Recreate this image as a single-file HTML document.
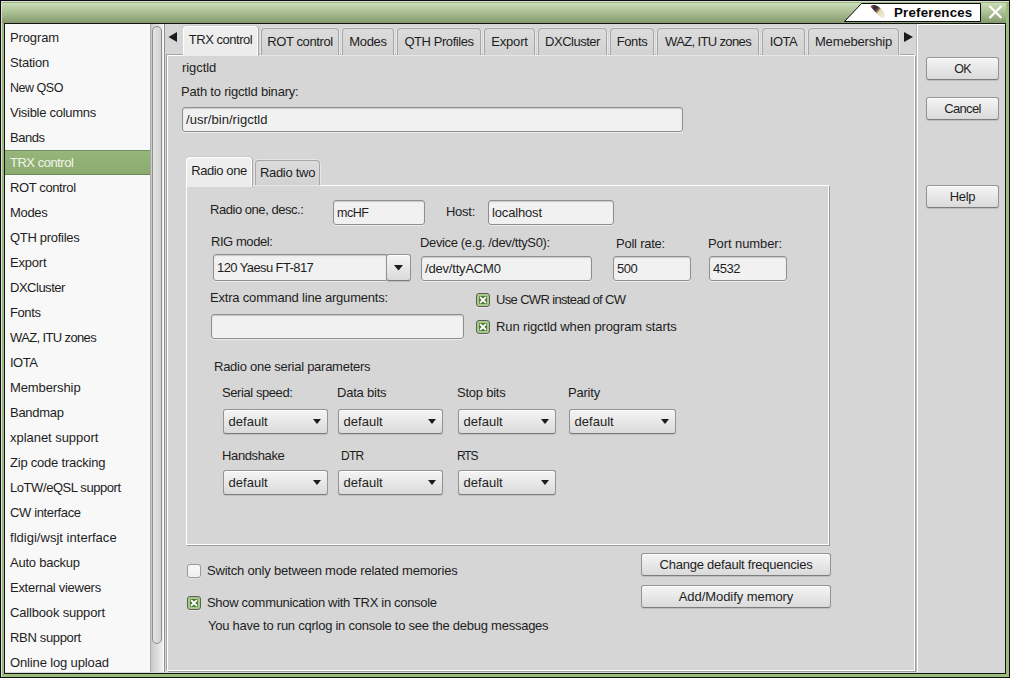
<!DOCTYPE html>
<html><head><meta charset="utf-8"><title>Preferences</title>
<style>
*{box-sizing:border-box;margin:0;padding:0}
html,body{width:1010px;height:678px;overflow:hidden}
body{position:relative;background:#9cbc7e;font-family:"Liberation Sans",sans-serif;font-size:13px;letter-spacing:-0.25px;color:#1e1e1e}
.a{position:absolute}
.t{position:absolute;white-space:nowrap;line-height:16px;height:16px;margin-top:1px}
/* frame */
#frame{left:0;top:0;width:1010px;height:678px;border:1px solid #0c0c0c}
#hl-top{left:1px;top:1px;width:1008px;height:1px;background:#dcdcdc}
#hl-left{left:1px;top:1px;width:1px;height:676px;background:#dcdcdc}
#titlebar{left:2px;top:2px;width:1004px;height:21px;background:linear-gradient(#9dba82 0,#9dba82 1px,#c9deb5 1.100px,#a8bd91 11px,#84996b 21px)}
#inner-border{left:4px;top:23px;width:1002px;height:651px;border:1px solid #141414;background:#d6d6d6}
/* list */
#list{left:5px;top:24px;width:145px;height:648px;background:#f8f8f8;overflow:hidden}
#list .t{left:5px}
#sel{left:0;top:126px;width:145px;height:25px;background:linear-gradient(#96b57a,#8cab70);border-top:1px solid #748f5b;border-bottom:1px solid #708a57}
#trough{left:150px;top:24px;width:13px;height:648px;background:linear-gradient(90deg,#c9c9c9,#f0f0f0);border-left:1px solid #a9a9a9}
#thumb{left:152px;top:26px;width:10px;height:618px;border:1px solid #8e8e8e;border-radius:5px;background:linear-gradient(90deg,#e4e4e4,#d2d2d2)}
/* notebook */
.tab{position:absolute;top:28px;height:27px;background:linear-gradient(#dcdcdc,#d2d2d2);border:1px solid #a6a6a6;border-bottom:none;border-radius:4px 4px 0 0;box-shadow:0 0 0 1px #e6e6e6;text-align:center;line-height:25px;white-space:nowrap}
.tab.on{top:26px;height:30px;background:linear-gradient(#efefef,#ebebeb);border:1px solid #fff;border-bottom:none;box-shadow:1px 0 0 #a6a6a6,0 -1px 0 #c8c8c8;line-height:26px;z-index:3}
.page{position:absolute;border:1px solid #fff;background:#d6d6d6;box-shadow:1px 1px 0 #9c9c9c,-1px -1px 0 #a4a4a4}
.entry{position:absolute;height:25px;background:#f1f1f1;border:1px solid #8e8e8e;border-radius:3px;box-shadow:inset 0 1px 1px #c8c8c8,0 1px 0 #ececec;line-height:23px;padding-left:3px;white-space:nowrap}
.btn{position:absolute;height:23px;background:linear-gradient(#f5f5f5,#dadada);border:1px solid #949494;border-bottom-color:#7c7c7c;border-radius:3px;box-shadow:inset 0 1px 0 #fff,0 1px 1px #bdbdbd;text-align:center;line-height:21px;white-space:nowrap}
.combo{position:absolute;height:25px;background:linear-gradient(#f5f5f5,#dadada);border:1px solid #949494;border-bottom-color:#7c7c7c;border-radius:3px;box-shadow:inset 0 1px 0 #fff,0 1px 1px #bdbdbd;line-height:23px;padding-left:4.500px;white-space:nowrap}
.combo:after{content:"";position:absolute;right:6.500px;top:9px;border:4.500px solid transparent;border-top:5.500px solid #1c1c1c;border-bottom:none}
.cb{position:absolute;width:14px;height:14px;border:1px solid #999;border-radius:3px;background:linear-gradient(#f8f8f8,#f0f0f0);box-shadow:0 1px 0 #e4e4e4}
.cb.on{border-color:#5e5e5e;background:#a7cb87}
.cb.on svg{position:absolute;left:0;top:0}
</style></head><body>
<div class="a" id="frame"></div>
<div class="a" id="hl-top"></div><div class="a" id="hl-left"></div>
<div class="a" id="titlebar"></div>
<div class="a" id="inner-border"></div>

<!-- title tab -->
<svg class="a" style="left:840px;top:0" width="170" height="24" viewBox="0 0 170 24">
 <polygon points="4.5,21.5 21.5,3.5 140.5,3.5 140.5,21.5" fill="#fff" stroke="#0c0c0c" stroke-width="1"/>
 <defs><linearGradient id="fg" gradientUnits="userSpaceOnUse" x1="30.500" y1="6" x2="44.500" y2="17.500"><stop offset="0" stop-color="#93522c"/><stop offset=".1" stop-color="#6a4030"/><stop offset=".22" stop-color="#2e2c42"/><stop offset=".36" stop-color="#3a3444"/><stop offset=".46" stop-color="#8e6844"/><stop offset=".56" stop-color="#e4d9bc"/><stop offset="1" stop-color="#f2eddd"/></linearGradient></defs>
 <path d="M30.500 6.500C31.500 5.200 33 4.800 34.500 5 38 5.500 42.500 9.500 44.300 12.500 45.300 14.300 45 16.500 43.900 17.500L44.600 19.300 43.400 17.600C42 17.700 40.500 17.100 39.800 16.600 37.500 14.500 33.500 10 30.500 6.500z" fill="url(#fg)"/>
 <path d="M149.500 6l12 12M161.500 6l-12 12" stroke="#fdfdfd" stroke-width="2.200" fill="none"/>
</svg>
<div class="t" style="left:894px;top:4px;font-weight:bold;font-size:13.3px;letter-spacing:0;color:#0a0a0a"><span style="letter-spacing:0.21px">Preferences</span></div>

<!-- left list -->
<div class="a" id="list">
 <div class="a" id="sel"></div>
 <div class="t" style="top:5px"><span style="letter-spacing:-0.13px">Program</span></div>
 <div class="t" style="top:30px"><span style="letter-spacing:-0.19px">Station</span></div>
 <div class="t" style="top:55px"><span style="font-size:12.5px;letter-spacing:-0.48px">New QSO</span></div>
 <div class="t" style="top:80px"><span style="letter-spacing:-0.27px">Visible columns</span></div>
 <div class="t" style="top:105px"><span style="letter-spacing:-0.47px">Bands</span></div>
 <div class="t" style="top:130px;color:#f4f4ea"><span style="letter-spacing:-0.48px">TRX control</span></div>
 <div class="t" style="top:155px"><span style="letter-spacing:-0.38px">ROT control</span></div>
 <div class="t" style="top:180px"><span style="letter-spacing:-0.32px">Modes</span></div>
 <div class="t" style="top:205px"><span style="letter-spacing:-0.3px">QTH profiles</span></div>
 <div class="t" style="top:230px"><span style="letter-spacing:-0.2px">Export</span></div>
 <div class="t" style="top:255px"><span style="letter-spacing:-0.49px">DXCluster</span></div>
 <div class="t" style="top:280px"><span style="letter-spacing:-0.4px">Fonts</span></div>
 <div class="t" style="top:305px"><span style="letter-spacing:-0.63px">WAZ, ITU zones</span></div>
 <div class="t" style="top:330px"><span style="letter-spacing:-0.51px">IOTA</span></div>
 <div class="t" style="top:355px"><span style="letter-spacing:-0.1px">Membership</span></div>
 <div class="t" style="top:380px"><span style="letter-spacing:-0.27px">Bandmap</span></div>
 <div class="t" style="top:405px"><span style="letter-spacing:-0.04px">xplanet support</span></div>
 <div class="t" style="top:430px"><span style="letter-spacing:-0.22px">Zip code tracking</span></div>
 <div class="t" style="top:455px"><span style="letter-spacing:-0.43px">LoTW/eQSL support</span></div>
 <div class="t" style="top:480px"><span style="letter-spacing:-0.37px">CW interface</span></div>
 <div class="t" style="top:505px"><span style="letter-spacing:0.02px">fldigi/wsjt interface</span></div>
 <div class="t" style="top:530px"><span style="letter-spacing:-0.23px">Auto backup</span></div>
 <div class="t" style="top:555px"><span style="letter-spacing:-0.28px">External viewers</span></div>
 <div class="t" style="top:580px"><span style="letter-spacing:-0.17px">Callbook support</span></div>
 <div class="t" style="top:605px"><span style="letter-spacing:-0.33px">RBN support</span></div>
 <div class="t" style="top:630px"><span style="letter-spacing:-0.14px">Online log upload</span></div>
</div>
<div class="a" id="trough"></div>
<div class="a" id="thumb"></div>
<div class="a" style="left:163px;top:24px;width:1px;height:648px;background:#fbfbfb"></div>
<div class="a" style="left:164px;top:24px;width:1px;height:648px;background:#8f8f8f"></div>

<!-- right button panel -->
<div class="a" style="left:916px;top:24px;width:1px;height:648px;background:#bdbdbd"></div>
<div class="a" style="left:917px;top:24px;width:88px;height:1px;background:#fdfdfd"></div>
<div class="a" style="left:917px;top:24px;width:1px;height:648px;background:#fdfdfd"></div>
<div class="btn" style="left:926px;top:57px;width:73px"><span style="font-size:12.5px;letter-spacing:-0.77px">OK</span></div>
<div class="btn" style="left:926px;top:97px;width:73px"><span style="letter-spacing:-0.62px">Cancel</span></div>
<div class="btn" style="left:926px;top:185px;width:73px"><span style="letter-spacing:-0.26px">Help</span></div>

<!-- main notebook -->
<svg class="a" style="left:168px;top:31px" width="10" height="12"><polygon points="9,1 9,11 0.500,6" fill="#1c1c1c"/></svg>
<svg class="a" style="left:903px;top:31px" width="11" height="12"><polygon points="1,1 1,11 10,6" fill="#1c1c1c"/></svg>
<div class="page" style="left:167px;top:55px;width:748px;height:616px"></div>
<div class="tab on" style="left:183px;width:75px"><span style="letter-spacing:-0.48px">TRX control</span></div>
<div class="tab" style="left:261px;width:78px"><span style="letter-spacing:-0.38px">ROT control</span></div>
<div class="tab" style="left:342px;width:52px"><span style="letter-spacing:-0.32px">Modes</span></div>
<div class="tab" style="left:397px;width:84px"><span style="letter-spacing:-0.43px">QTH Profiles</span></div>
<div class="tab" style="left:484px;width:51px"><span style="letter-spacing:-0.2px">Export</span></div>
<div class="tab" style="left:538px;width:69px"><span style="letter-spacing:-0.49px">DXCluster</span></div>
<div class="tab" style="left:610px;width:44px"><span style="letter-spacing:-0.4px">Fonts</span></div>
<div class="tab" style="left:657px;width:102px"><span style="letter-spacing:-0.63px">WAZ, ITU zones</span></div>
<div class="tab" style="left:762px;width:43px"><span style="letter-spacing:-0.51px">IOTA</span></div>
<div class="tab" style="left:808px;width:91px"><span style="letter-spacing:-0.15px">Memebership</span></div>

<div class="t" style="left:182px;top:59px"><span style="letter-spacing:-0.08px">rigctld</span></div>
<div class="t" style="left:181px;top:83px"><span style="letter-spacing:-0.2px">Path to rigctld binary:</span></div>
<div class="entry" style="left:182px;top:107px;width:501px"><span style="letter-spacing:0.04px">/usr/bin/rigctld</span></div>

<!-- inner notebook -->
<div class="page" style="left:186px;top:185px;width:643px;height:360px;box-shadow:1px 1px 0 #9c9c9c"></div>
<div class="tab on" style="left:186px;top:157px;width:66px;height:30px;line-height:25px"><span style="letter-spacing:-0.41px">Radio one</span></div>
<div class="tab" style="left:255px;top:160px;width:65px;height:25px;line-height:23px"><span style="letter-spacing:-0.29px">Radio two</span></div>

<div class="t" style="left:210px;top:201px"><span style="letter-spacing:-0.46px">Radio one, desc.:</span></div>
<div class="entry" style="left:333px;top:200px;width:92px"><span style="font-size:12.5px;letter-spacing:-0.44px">mcHF</span></div>
<div class="t" style="left:446px;top:203px"><span style="letter-spacing:-0.27px">Host:</span></div>
<div class="entry" style="left:488px;top:200px;width:126px"><span style="letter-spacing:-0.16px">localhost</span></div>

<div class="t" style="left:211px;top:233px"><span style="letter-spacing:-0.44px">RIG model:</span></div>
<div class="entry" style="left:213px;top:254px;width:174px;height:27px;line-height:25px;padding-left:3px;border-radius:3px 0 0 3px"><span style="letter-spacing:-0.6px">120 Yaesu FT-817</span></div>
<div class="btn" style="left:386px;top:254px;width:25px;height:27px"><svg class="a" style="left:7px;top:10px" width="10" height="6"><polygon points="0,0 9,0 4.500,5.500" fill="#1c1c1c"/></svg></div>
<div class="t" style="left:420px;top:234px"><span style="letter-spacing:-0.36px">Device (e.g. /dev/ttyS0):</span></div>
<div class="entry" style="left:421px;top:256px;width:171px"><span style="letter-spacing:-0.19px">/dev/ttyACM0</span></div>
<div class="t" style="left:616px;top:235px"><span style="letter-spacing:-0.23px">Poll rate:</span></div>
<div class="entry" style="left:613px;top:256px;width:78px"><span style="letter-spacing:-0.48px">500</span></div>
<div class="t" style="left:708px;top:235px"><span style="letter-spacing:-0.09px">Port number:</span></div>
<div class="entry" style="left:709px;top:256px;width:78px"><span style="letter-spacing:-0.48px">4532</span></div>

<div class="t" style="left:210px;top:289px"><span style="letter-spacing:-0.19px">Extra command line arguments:</span></div>
<div class="entry" style="left:211px;top:314px;width:253px"></div>
<div class="cb on" style="left:476px;top:293px"><svg width="12" height="12"><rect x="2" y="2" width="8" height="8" rx="1" fill="#4f7a3c"/><path d="M3.600 3.600l4.800 4.800M8.400 3.600l-4.800 4.800" stroke="#fff" stroke-width="1.900" stroke-linecap="round"/></svg></div>
<div class="t" style="left:496px;top:291px"><span style="letter-spacing:-0.65px">Use CWR instead of CW</span></div>
<div class="cb on" style="left:476px;top:320px"><svg width="12" height="12"><rect x="2" y="2" width="8" height="8" rx="1" fill="#4f7a3c"/><path d="M3.600 3.600l4.800 4.800M8.400 3.600l-4.800 4.800" stroke="#fff" stroke-width="1.900" stroke-linecap="round"/></svg></div>
<div class="t" style="left:496px;top:318px"><span style="letter-spacing:-0.12px">Run rigctld when program starts</span></div>

<div class="t" style="left:214px;top:358px"><span style="letter-spacing:-0.26px">Radio one serial parameters</span></div>
<div class="t" style="left:222px;top:384px"><span style="letter-spacing:-0.42px">Serial speed:</span></div>
<div class="t" style="left:337px;top:384px"><span style="letter-spacing:-0.21px">Data bits</span></div>
<div class="t" style="left:457px;top:384px"><span style="letter-spacing:-0.24px">Stop bits</span></div>
<div class="t" style="left:568px;top:384px"><span style="letter-spacing:-0.21px">Parity</span></div>
<div class="combo" style="left:223px;top:409px;width:105px"><span style="letter-spacing:0.02px">default</span></div>
<div class="combo" style="left:338px;top:409px;width:105px"><span style="letter-spacing:0.02px">default</span></div>
<div class="combo" style="left:458px;top:409px;width:98px"><span style="letter-spacing:0.02px">default</span></div>
<div class="combo" style="left:569px;top:409px;width:107px"><span style="letter-spacing:0.02px">default</span></div>
<div class="t" style="left:222px;top:447px"><span style="letter-spacing:-0.37px">Handshake</span></div>
<div class="t" style="left:341px;top:447px"><span style="font-size:12px;letter-spacing:-0.71px">DTR</span></div>
<div class="t" style="left:457px;top:447px"><span style="font-size:12px;letter-spacing:-1.13px">RTS</span></div>
<div class="combo" style="left:223px;top:470px;width:105px"><span style="letter-spacing:0.02px">default</span></div>
<div class="combo" style="left:338px;top:470px;width:105px"><span style="letter-spacing:0.02px">default</span></div>
<div class="combo" style="left:458px;top:470px;width:98px"><span style="letter-spacing:0.02px">default</span></div>

<div class="cb" style="left:187px;top:564px"></div>
<div class="t" style="left:207px;top:562px"><span style="letter-spacing:-0.2px">Switch only between mode related memories</span></div>
<div class="cb on" style="left:187px;top:596px"><svg width="12" height="12"><rect x="2" y="2" width="8" height="8" rx="1" fill="#4f7a3c"/><path d="M3.600 3.600l4.800 4.800M8.400 3.600l-4.800 4.800" stroke="#fff" stroke-width="1.900" stroke-linecap="round"/></svg></div>
<div class="t" style="left:207px;top:594px"><span style="letter-spacing:-0.32px">Show communication with TRX in console</span></div>
<div class="t" style="left:208px;top:617px"><span style="letter-spacing:-0.25px">You have to run cqrlog in console to see the debug messages</span></div>
<div class="btn" style="left:641px;top:553px;width:190px"><span style="letter-spacing:-0.23px">Change default frequencies</span></div>
<div class="btn" style="left:641px;top:585px;width:190px"><span style="letter-spacing:-0.06px">Add/Modify memory</span></div>
</body></html>
